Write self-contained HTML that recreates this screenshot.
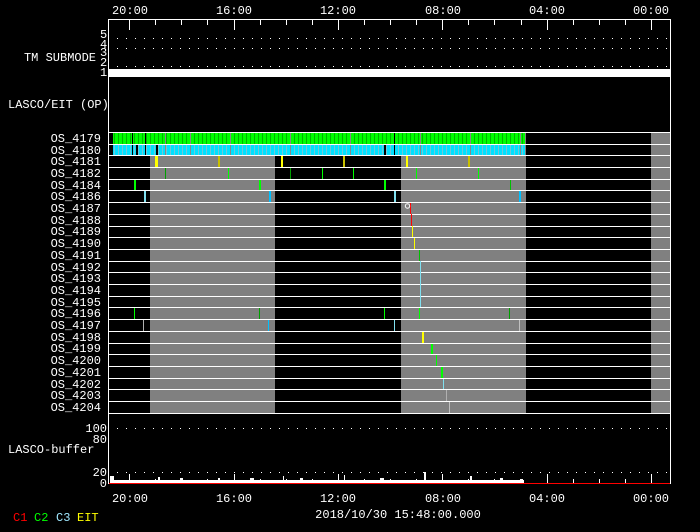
<!DOCTYPE html>
<html><head><meta charset="utf-8"><style>
html,body{margin:0;padding:0;background:#000;}
svg{display:block}
text{font-family:"Liberation Mono","DejaVu Sans Mono",monospace;fill:#fff;font-size:12px}
</style></head><body>
<svg width="700" height="532" viewBox="0 0 700 532" xmlns="http://www.w3.org/2000/svg">
<defs>
<pattern id="gp" width="4" height="12" patternUnits="userSpaceOnUse"><rect width="4" height="12" fill="#00ff00"/><rect x="2" width="1" height="12" fill="#00b400"/></pattern>
<pattern id="cp" width="4" height="12" patternUnits="userSpaceOnUse"><rect width="4" height="12" fill="#00e0ff"/><rect x="2" width="1" height="12" fill="#70c8d8"/></pattern>
<pattern id="dots" width="9" height="2" patternUnits="userSpaceOnUse"><rect width="1" height="1" fill="#fff"/></pattern>
</defs>
<g text-anchor="middle">
<text x="130" y="14">20:00</text><text x="234" y="14">16:00</text><text x="338" y="14">12:00</text><text x="443" y="14">08:00</text><text x="547" y="14">04:00</text><text x="651" y="14">00:00</text>
<text x="130" y="502">20:00</text><text x="234" y="502">16:00</text><text x="338" y="502">12:00</text><text x="443" y="502">08:00</text><text x="547" y="502">04:00</text><text x="651" y="502">00:00</text>
</g>
<rect x="113" y="38" width="556" height="1" fill="url(#dots)"/>
<rect x="113" y="48" width="556" height="1" fill="url(#dots)"/>
<rect x="113" y="57" width="556" height="1" fill="url(#dots)"/>
<rect x="113" y="66" width="556" height="1" fill="url(#dots)"/>
<rect x="109" y="69" width="562" height="8" fill="#fff"/>
<g fill="#fff" font-size="11"><text x="100" y="38">5</text><text x="100" y="48">4</text><text x="100" y="56">3</text><text x="100" y="66">2</text><text x="100" y="76">1</text></g>
<text x="96" y="61" text-anchor="end">TM SUBMODE</text>
<text x="8" y="108">LASCO/EIT (OP)</text>
<rect x="150" y="155" width="125" height="258" fill="#808080"/>
<rect x="401" y="155" width="125" height="258" fill="#808080"/>
<rect x="651" y="132" width="20" height="281" fill="#808080"/>
<rect x="525" y="132" width="1" height="23" fill="#808080"/>
<rect x="113" y="133" width="412" height="11" fill="url(#gp)"/>
<rect x="113" y="145" width="412" height="10" fill="url(#cp)"/>
<g fill="#000"><rect x="132" y="133" width="1" height="22"/><rect x="136" y="145" width="2" height="10"/><rect x="145" y="133" width="1" height="22"/><rect x="156" y="145" width="2" height="10"/><rect x="384" y="145" width="2" height="10"/><rect x="394" y="133" width="1" height="22"/></g>
<g fill="#888"><rect x="165" y="133" width="1" height="22"/><rect x="190" y="133" width="1" height="22"/><rect x="230" y="133" width="1" height="22"/><rect x="290" y="133" width="1" height="22"/><rect x="350" y="133" width="1" height="22"/><rect x="420" y="133" width="1" height="22"/><rect x="470" y="133" width="1" height="22"/><rect x="520" y="133" width="1" height="22"/></g>
<g fill="#fff">
<rect x="109" y="132" width="562" height="1"/><rect x="109" y="144" width="562" height="1"/><rect x="109" y="155" width="562" height="1"/><rect x="109" y="167" width="562" height="1"/><rect x="109" y="179" width="562" height="1"/><rect x="109" y="190" width="562" height="1"/><rect x="109" y="202" width="562" height="1"/><rect x="109" y="214" width="562" height="1"/><rect x="109" y="226" width="562" height="1"/><rect x="109" y="237" width="562" height="1"/><rect x="109" y="249" width="562" height="1"/><rect x="109" y="261" width="562" height="1"/><rect x="109" y="272" width="562" height="1"/><rect x="109" y="284" width="562" height="1"/><rect x="109" y="296" width="562" height="1"/><rect x="109" y="307" width="562" height="1"/><rect x="109" y="319" width="562" height="1"/><rect x="109" y="331" width="562" height="1"/><rect x="109" y="343" width="562" height="1"/><rect x="109" y="354" width="562" height="1"/><rect x="109" y="366" width="562" height="1"/><rect x="109" y="378" width="562" height="1"/><rect x="109" y="389" width="562" height="1"/><rect x="109" y="401" width="562" height="1"/><rect x="109" y="413" width="562" height="1"/>
</g>
<g>
<rect x="155" y="156" width="3" height="11" fill="#ffff00"/><rect x="218" y="156" width="2" height="11" fill="#c8c000"/><rect x="281" y="156" width="2" height="11" fill="#ffff00"/><rect x="343" y="156" width="2" height="11" fill="#c8c000"/><rect x="406" y="156" width="2" height="11" fill="#ffff00"/><rect x="468" y="156" width="2" height="11" fill="#c8c000"/>
<rect x="165" y="168" width="1" height="11" fill="#00a000"/><rect x="228" y="168" width="1" height="11" fill="#00ff00"/><rect x="290" y="168" width="1" height="11" fill="#00a000"/><rect x="322" y="168" width="1" height="11" fill="#00ff00"/><rect x="353" y="168" width="1" height="11" fill="#00ff00"/><rect x="416" y="168" width="1" height="11" fill="#00ff00"/><rect x="478" y="168" width="1" height="11" fill="#00ff00"/>
<rect x="134" y="180" width="2" height="10" fill="#00ff00"/><rect x="259" y="180" width="2" height="10" fill="#00ff00"/><rect x="384" y="180" width="2" height="10" fill="#00ff00"/><rect x="510" y="180" width="1" height="10" fill="#00c000"/>
<rect x="144" y="191" width="2" height="11" fill="#80e0f0"/><rect x="269" y="191" width="2" height="11" fill="#00c0ff"/><rect x="394" y="191" width="2" height="11" fill="#80e0f0"/><rect x="519" y="191" width="2" height="11" fill="#00c0ff"/>
<rect x="410" y="203" width="1" height="11" fill="#ff0000"/><circle cx="407.5" cy="206" r="2.2" fill="none" stroke="#fff" stroke-width="1"/>
<rect x="411" y="214" width="1" height="12" fill="#ff0000"/>
<rect x="412" y="226" width="1" height="11" fill="#ffff00"/>
<rect x="414" y="238" width="1" height="11" fill="#ffff00"/>
<rect x="419" y="250" width="1" height="11" fill="#00c000"/>
<rect x="420" y="261" width="1" height="46" fill="#80e0f0"/>
<rect x="134" y="308" width="1" height="11" fill="#00ff00"/><rect x="259" y="308" width="1" height="11" fill="#00a000"/><rect x="384" y="308" width="1" height="11" fill="#00ff00"/><rect x="419" y="308" width="1" height="11" fill="#00ff00"/><rect x="509" y="308" width="1" height="11" fill="#00a000"/>
<rect x="143" y="320" width="1" height="11" fill="#b0b0b0"/><rect x="268" y="320" width="1" height="11" fill="#00c0ff"/><rect x="394" y="320" width="1" height="11" fill="#80e0f0"/><rect x="519" y="320" width="1" height="11" fill="#c0c0c0"/>
<rect x="422" y="332" width="2" height="11" fill="#ffff00"/>
<rect x="431" y="344" width="2" height="10" fill="#00ff00"/>
<rect x="436" y="355" width="1" height="11" fill="#00ff00"/>
<rect x="441" y="367" width="2" height="11" fill="#00ff00"/>
<rect x="443" y="379" width="1" height="10" fill="#80e0f0"/>
<rect x="446" y="390" width="1" height="11" fill="#b0b0b0"/>
<rect x="449" y="402" width="1" height="11" fill="#c0c0c0"/>
</g>
<g text-anchor="end">
<text x="101" y="142">OS_4179</text><text x="101" y="154">OS_4180</text><text x="101" y="165">OS_4181</text><text x="101" y="177">OS_4182</text><text x="101" y="189">OS_4184</text><text x="101" y="200">OS_4186</text><text x="101" y="212">OS_4187</text><text x="101" y="224">OS_4188</text><text x="101" y="235">OS_4189</text><text x="101" y="247">OS_4190</text><text x="101" y="259">OS_4191</text><text x="101" y="271">OS_4192</text><text x="101" y="282">OS_4193</text><text x="101" y="294">OS_4194</text><text x="101" y="306">OS_4195</text><text x="101" y="317">OS_4196</text><text x="101" y="329">OS_4197</text><text x="101" y="341">OS_4198</text><text x="101" y="352">OS_4199</text><text x="101" y="364">OS_4200</text><text x="101" y="376">OS_4201</text><text x="101" y="388">OS_4202</text><text x="101" y="399">OS_4203</text><text x="101" y="411">OS_4204</text>
</g>
<rect x="113" y="428" width="558" height="1" fill="url(#dots)"/>
<rect x="113" y="439" width="558" height="1" fill="url(#dots)"/>
<rect x="113" y="472" width="558" height="1" fill="url(#dots)"/>
<g text-anchor="end"><text x="107" y="432">100</text><text x="107" y="443">80</text><text x="107" y="476">20</text><text x="107" y="487">0</text></g>
<text x="8" y="453">LASCO-buffer</text>
<!-- buffer ticks under data -->
<g fill="#fff">
<rect x="129" y="474" width="1" height="9"/><rect x="155" y="479" width="1" height="4"/><rect x="181" y="479" width="1" height="4"/><rect x="207" y="479" width="1" height="4"/><rect x="234" y="474" width="1" height="9"/><rect x="260" y="479" width="1" height="4"/><rect x="286" y="479" width="1" height="4"/><rect x="312" y="479" width="1" height="4"/><rect x="338" y="474" width="1" height="9"/><rect x="364" y="479" width="1" height="4"/><rect x="390" y="479" width="1" height="4"/><rect x="416" y="479" width="1" height="4"/><rect x="442" y="474" width="1" height="9"/><rect x="468" y="479" width="1" height="4"/><rect x="494" y="479" width="1" height="4"/><rect x="521" y="479" width="1" height="4"/>
</g>
<rect x="110" y="480" width="414" height="3" fill="#fff"/>
<rect x="110" y="476" width="4" height="7" fill="#fff"/>
<g fill="#fff"><rect x="158" y="477" width="2" height="6"/><rect x="218" y="478" width="2" height="5"/><rect x="283" y="476" width="1" height="7"/><rect x="344" y="475" width="1" height="8"/><rect x="424" y="472" width="2" height="11"/><rect x="442" y="475" width="1" height="8"/><rect x="470" y="476" width="2" height="7"/><rect x="180" y="478" width="3" height="2"/><rect x="250" y="478" width="4" height="2"/><rect x="300" y="478" width="3" height="2"/><rect x="380" y="478" width="4" height="2"/><rect x="500" y="478" width="3" height="2"/><rect x="520" y="479" width="3" height="4"/></g>
<rect x="109" y="483" width="562" height="1" fill="#ff0000"/>
<rect x="108" y="19" width="1" height="465" fill="#fff"/>
<rect x="670" y="19" width="1" height="465" fill="#fff"/>
<rect x="108" y="19" width="563" height="1" fill="#fff"/>
<g fill="#fff">
<rect x="129" y="20" width="1" height="10"/><rect x="155" y="20" width="1" height="5"/><rect x="181" y="20" width="1" height="5"/><rect x="207" y="20" width="1" height="5"/><rect x="234" y="20" width="1" height="10"/><rect x="260" y="20" width="1" height="5"/><rect x="286" y="20" width="1" height="5"/><rect x="312" y="20" width="1" height="5"/><rect x="338" y="20" width="1" height="10"/><rect x="364" y="20" width="1" height="5"/><rect x="390" y="20" width="1" height="5"/><rect x="416" y="20" width="1" height="5"/><rect x="442" y="20" width="1" height="10"/><rect x="468" y="20" width="1" height="5"/><rect x="494" y="20" width="1" height="5"/><rect x="521" y="20" width="1" height="5"/><rect x="547" y="20" width="1" height="10"/><rect x="573" y="20" width="1" height="5"/><rect x="599" y="20" width="1" height="5"/><rect x="625" y="20" width="1" height="5"/><rect x="651" y="20" width="1" height="10"/>
<rect x="547" y="474" width="1" height="9"/><rect x="573" y="479" width="1" height="4"/><rect x="599" y="479" width="1" height="4"/><rect x="625" y="479" width="1" height="4"/><rect x="651" y="474" width="1" height="9"/>
</g>
<text x="398" y="518" text-anchor="middle">2018/10/30 15:48:00.000</text>
<g font-size="10"><text x="13" y="521" style="fill:#ff0000">C1</text><text x="34" y="521" style="fill:#00ff00">C2</text><text x="56" y="521" style="fill:#a0e8ff">C3</text><text x="77" y="521" style="fill:#ffff00">EIT</text></g>
</svg>
</body></html>
